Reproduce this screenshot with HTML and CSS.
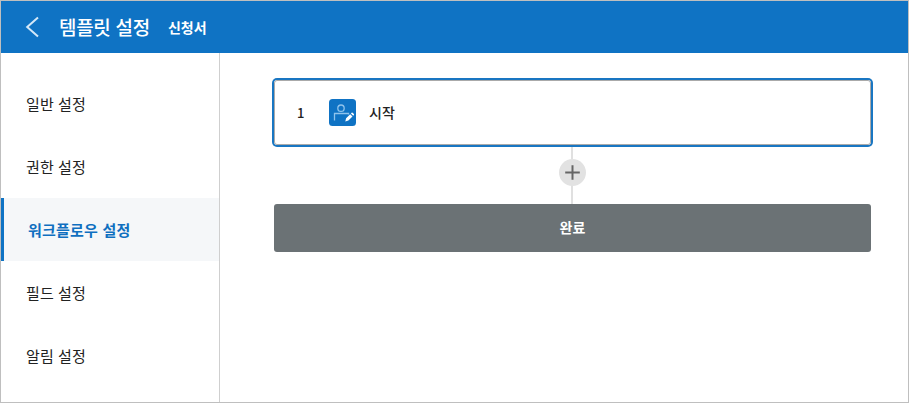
FILE: index.html
```
<!DOCTYPE html>
<html lang="ko">
<head>
<meta charset="utf-8">
<title>템플릿 설정</title>
<link rel="stylesheet" href="styles.css">
</head>
<body>
<div class="app">
  <header class="header">
    <svg class="back" width="14" height="22" viewBox="0 0 14 22"><path d="M13 1.5 2.2 11l10.8 9.5"/></svg>
    <h1 class="title">템플릿 설정</h1>
    <span class="subtitle">신청서</span>
  </header>
  <div class="body">
    <nav class="sidebar">
      <a class="item">일반 설정</a>
      <a class="item">권한 설정</a>
      <a class="item active">워크플로우 설정</a>
      <a class="item">필드 설정</a>
      <a class="item">알림 설정</a>
    </nav>
    <main class="flow">
      <div class="step">
        <span class="number">1</span>
        <svg class="step-icon" width="27" height="27" viewBox="0 0 27 27">
          <rect class="tile" width="27" height="27" rx="3.5"/>
          <circle class="line" cx="12" cy="9.2" r="3.2"/>
          <path class="line" d="M5.5 21.5v-7h14v1"/>
          <path class="pencil" d="m16.3 22.4.8-3.1 4.1-4.1 2.3 2.3-4.1 4.1zM21.9 14.5l.7-.7q.5-.4 1 0l1.3 1.3q.4.5 0 1l-.7.7z"/>
        </svg>
        <span class="name">시작</span>
      </div>
      <div class="connector">
        <svg class="add" width="27" height="27" viewBox="0 0 27 27"><circle cx="13.5" cy="13.5" r="13.5"/><path d="M6.2 13.5h14.6M13.5 6.2v14.6"/></svg>
      </div>
      <div class="done">완료</div>
    </main>
  </div>
</div>
</body>
</html>
```
FILE: styles.css
```
* { box-sizing: border-box; }
body {
  margin: 0;
  color: #222;
  font-family: "Noto Sans CJK KR", sans-serif;
}
.app {
  display: flex;
  flex-direction: column;
  height: 403px;
  border: 1px solid #bfbfbf;
  background: #fff;
}
.header {
  display: flex;
  align-items: center;
  flex: none;
  height: 52px;
  padding-left: 24px;
  background: #0f73c4;
  color: #fff;
}
.back { fill: none; stroke: #d4e8f8; stroke-width: 2; }
.title {
  margin: 0 0 0 20px;
  font-size: 19px;
  font-weight: 500;
  letter-spacing: -0.3px;
  line-height: 52px;
}
.subtitle { margin-left: 18px; font-size: 14px; font-weight: 700; line-height: 20px; padding-bottom: 1px; }
.body { display: flex; flex: 1; }
.sidebar {
  flex: none;
  width: 219px;
  padding-top: 19px;
  border-right: 1px solid #cfcfcf;
}
.item {
  display: block;
  height: 63px;
  padding-left: 25px;
  font-size: 15px;
  letter-spacing: 0.1px;
  line-height: 63px;
}
.active {
  padding-left: 24px;
  border-left: 3px solid #0f73c4;
  background: #f5f7f9;
  color: #0f6fc0;
  font-weight: 700;
  letter-spacing: 0.2px;
}
.flow { flex: 1; padding: 27px 37px 0 54px; }
.step {
  display: flex;
  align-items: center;
  height: 65px;
  padding-left: 22px;
  border: 1px solid #aaa;
  border-radius: 3px;
  box-shadow: 0 0 0 2px #1976c2;
}
.number { width: 32px; padding-bottom: 1px; font-size: 13px; font-weight: 500; }
.tile { fill: #0f73c4; }
.line { fill: none; stroke: #8fc3ec; stroke-width: 1.3; }
.pencil { fill: #fff; }
.name { margin-left: 13px; padding-bottom: 2px; font-size: 14px; font-weight: 500; }
.connector {
  display: flex;
  justify-content: center;
  height: 57px;
  margin-top: 2px;
  padding-top: 12px;
  background: linear-gradient(#e0e0e0, #e0e0e0) 297px 0 / 2px 100% no-repeat;
}
.add circle { fill: #e2e2e2; }
.add path { stroke: #666; stroke-width: 2; }
.done {
  height: 48px;
  border-radius: 3px;
  background: #6b7275;
  color: #fff;
  font-size: 14px;
  font-weight: 700;
  line-height: 46px;
  text-align: center;
}
```
